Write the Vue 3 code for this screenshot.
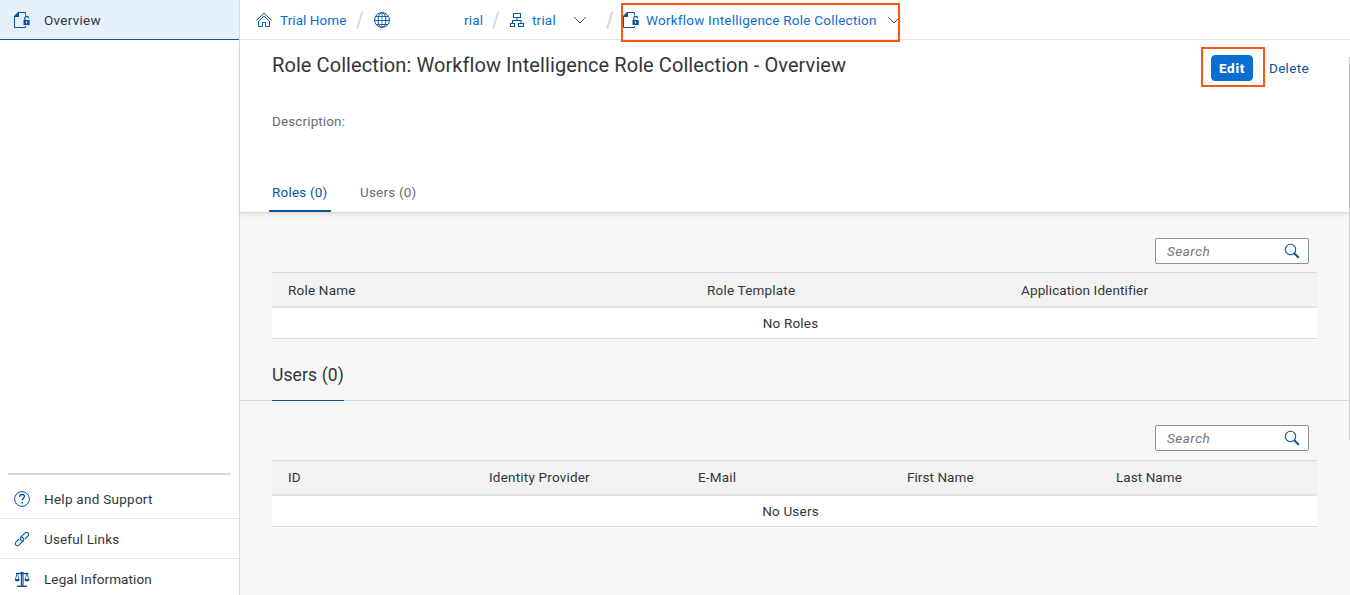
<script setup>
const help = [
  { label: 'Help and Support', icon: 'help', cls: 't-help' },
  { label: 'Useful Links', icon: 'link', cls: 't-links' },
  { label: 'Legal Information', icon: 'legal', cls: 't-legal' },
]
const roleColumns = ['Role Name', 'Role Template', 'Application Identifier']
const userColumns = ['ID', 'Identity Provider', 'E-Mail', 'First Name', 'Last Name']
</script>

<template>
  <div class="shell">
    <aside class="side">
      <a class="nav selected">
        <svg class="icon" viewBox="0 0 16 16"><use href="#i-role" /></svg>
        <span>Overview</span>
      </a>
      <div class="grow"></div>
      <div class="rule"></div>
      <a v-for="h in help" :key="h.label" class="nav">
        <svg class="icon" viewBox="0 0 16 16"><use :href="'#i-' + h.icon" /></svg>
        <span :class="h.cls">{{ h.label }}</span>
      </a>
    </aside>

    <main class="main">
      <nav class="crumbs">
        <svg class="icon" viewBox="0 0 16 16"><use href="#i-home" /></svg>
        <span class="c-home">Trial Home</span>
        <svg class="slash" viewBox="0 0 8 18"><path d="M6.300 0.500L1.200 17.500" /></svg>
        <svg class="icon globe" viewBox="0 0 16 16"><use href="#i-globe" /></svg>
        <span class="c-rial">rial</span>
        <svg class="slash s2" viewBox="0 0 8 18"><path d="M6.300 0.500L1.200 17.500" /></svg>
        <svg class="icon org" viewBox="0 0 16 16"><use href="#i-org" /></svg>
        <span class="c-trial">trial</span>
        <svg class="chev" viewBox="0 0 12 8"><path d="M.3 1.200L6 7 11.700 1.200" /></svg>
        <svg class="slash s3" viewBox="0 0 8 18"><path d="M6.300 0.500L1.200 17.500" /></svg>
        <svg class="icon role" viewBox="0 0 16 16"><use href="#i-role" /></svg>
        <span class="c-coll">Workflow Intelligence Role Collection</span>
        <svg class="chev last" viewBox="0 0 12 8"><path d="M.3 1.200L6 7 11.700 1.200" /></svg>
      </nav>

      <header class="head">
        <div class="title-row">
          <h1>Role Collection: Workflow Intelligence Role Collection - Overview</h1>
          <div class="actions">
            <button class="edit">Edit</button>
            <a class="delete">Delete</a>
          </div>
        </div>
        <p class="desc">Description:</p>
        <div class="tabs">
          <a class="tab active"><span>Roles (0)</span></a>
          <a class="tab"><span>Users (0)</span></a>
        </div>
      </header>

      <section class="block roles">
        <div class="search">
          <span>Search</span>
          <svg class="mag" viewBox="0 0 16 16"><use href="#i-search" /></svg>
        </div>
        <div class="table">
          <div class="thead role-cols"><span v-for="c in roleColumns" :key="c">{{ c }}</span></div>
          <div class="empty">No Roles</div>
        </div>
      </section>

      <div class="section-title"><h2>Users (0)</h2></div>

      <section class="block users">
        <div class="search">
          <span>Search</span>
          <svg class="mag" viewBox="0 0 16 16"><use href="#i-search" /></svg>
        </div>
        <div class="table">
          <div class="thead user-cols"><span v-for="c in userColumns" :key="c">{{ c }}</span></div>
          <div class="empty">No Users</div>
        </div>
      </section>
      <div class="scroll"></div>
    </main>

    <div class="mark mark-crumb"></div>
    <div class="mark mark-edit"></div>

    <svg class="defs" width="0" height="0">
      <symbol id="i-role" viewBox="0 0 16 16">
        <path d="M4.500 .5H11.500V3.500M.5 4.500V15.500H11.500V14" fill="none" stroke="currentColor" />
        <path d="M0 5V4L4 0H5V5Z" fill="currentColor" />
        <path d="M10.800 8V6.300a1.900 1.900 0 0 1 3.800 0" fill="none" stroke="currentColor" stroke-width="1.200" />
        <path fill-rule="evenodd" d="M9.500 8H15.700V13H9.500ZM12 9.500V11.500H13.200V9.500Z" fill="currentColor" />
      </symbol>
      <symbol id="i-home" viewBox="0 0 16 16">
        <g fill="none" stroke="currentColor" stroke-width="1">
          <path d="M.4 8.300L8 1.300 15.600 8.300" />
          <path d="M2.500 9.200V14.500H6.500V10.500H9.500V14.500H13.500V9.200L8 4.200Z" />
        </g>
      </symbol>
      <symbol id="i-globe" viewBox="0 0 16 16">
        <g fill="none" stroke="currentColor">
          <circle cx="8" cy="8" r="7.400" /><ellipse cx="8" cy="8" rx="3.900" ry="7.400" />
          <path d="M8 .5V15.500" stroke-width=".7" /><path d="M.5 8.500H15.500M2 4.500H14M2 12.500H14" stroke-width=".9" />
        </g>
      </symbol>
      <symbol id="i-org" viewBox="0 0 16 16">
        <g fill="none" stroke="currentColor" stroke-width="1.100">
          <path d="M4.500 1.500H11.500V5.500H4.500ZM1.500 11.500H5.500V14.500H1.500ZM9.500 11.500H14.500V14.500H9.500ZM8 5.500V8.500M3.500 11.500V8.500H12V11.500" />
        </g>
      </symbol>
      <symbol id="i-help" viewBox="0 0 16 16">
        <circle cx="8" cy="8" r="7.400" fill="none" stroke="currentColor" />
        <path d="M5.700 6V5.300C5.700 4 6.600 3.500 8 3.500S10.500 4.200 10.500 5.500C10.500 7.200 8.200 7.200 8.200 9.500" fill="none" stroke="currentColor" stroke-width="1.300" />
        <path d="M7.400 11H9V12.600H7.400Z" fill="currentColor" />
      </symbol>
      <symbol id="i-link" viewBox="0 0 16 16">
        <g fill="none" stroke="currentColor" stroke-width="1.100">
          <path d="M8.700 10.300L7 9C6 8.100 6 7 6.800 6.200L10.900 2.100C11.900 1.100 13.200 1.100 14.100 1.900S14.900 4.200 13.900 5.200L10.800 8.200" />
          <path d="M7.300 5.800L9 7C10 7.900 10 9 9.200 9.800L5.100 13.900C4.100 14.900 2.800 14.900 1.900 14.100S1.100 11.800 2.100 10.800L5.200 7.800" />
        </g>
      </symbol>
      <symbol id="i-legal" viewBox="0 0 16 16">
        <path d="M7.400 2V15M9 2V15" stroke="currentColor" stroke-width="1.200" />
        <path d="M3 15.300H13" stroke="currentColor" stroke-width="1.400" />
        <g fill="none" stroke="currentColor">
          <path d="M2 2.500H14.400" stroke-width="1.300" />
          <path d="M3 2.500L1.300 9M3.400 2.500L5.200 9M12.800 2.500L11 9M13.200 2.500L15 9" stroke-width=".8" />
        </g>
        <path d="M.7 8H5.700Q5.500 10.500 3.200 10.500T.7 8ZM10.500 8H15.500Q15.300 10.500 13 10.500T10.500 8ZM6.300 2.200A1.900 1.900 0 0 1 10 2.200Z" fill="currentColor" />
      </symbol>
      <symbol id="i-search" viewBox="0 0 16 16">
        <circle cx="6.500" cy="6.500" r="5.200" fill="none" stroke="currentColor" stroke-width="1.100" />
        <path d="M10.200 10.200L14.800 14.700" stroke="currentColor" stroke-width="2" />
      </symbol>
    </svg>
  </div>
</template>

<style>
body { overflow: hidden; }
</style>

<style scoped>
* { box-sizing: border-box; }
.shell { position: relative; display: flex; width: 1350px; height: 595px; overflow: hidden; background: #fff; color: #32363a; font: 13.500px/20px Roboto, "Noto Sans", sans-serif; letter-spacing: .2px; }
.defs { position: absolute; }
.icon { width: 16px; height: 16px; flex: none; color: #0854a0; }
.side { width: 240px; flex: none; display: flex; flex-direction: column; border-right: 1px solid #d9d9d9; }
.nav { height: 40px; flex: none; display: flex; align-items: center; padding-left: 14px; gap: 14px; border-bottom: 1px solid #e5e5e5; }
.nav:last-child { border-bottom: 0; margin-bottom: -4px; }
.nav span { white-space: nowrap; letter-spacing: .27px; }
.nav .t-links { letter-spacing: .15px; }
.nav .t-legal { letter-spacing: .1px; }
.selected { background: #e5f0fa; border-bottom-color: #0854a0; }
.grow { flex: 1; }
.rule { height: 2px; margin: 0 8px 4px; background: #d9d9d9; }
.main { position: relative; flex: 1; min-width: 0; background: #f7f7f7; }
.crumbs { height: 40px; display: flex; align-items: center; padding-left: 16px; background: #fff; border-bottom: 1px solid #e5e5e5; color: #0a6ed1; white-space: nowrap; }
.crumbs span { flex: none; }
.c-home { width: 67px; margin-left: 8px; letter-spacing: .08px; }
.slash { width: 8px; height: 18px; margin-left: 9px; flex: none; fill: none; stroke: #d9d9d9; stroke-width: 2.100; }
.globe { margin-left: 10px; }
.c-rial { width: 19px; margin-left: 74px; }
.org { margin-left: 9px; }
.c-trial { width: 23px; margin-left: 7px; }
.chev { width: 12px; height: 8px; margin-left: 19px; margin-top: 1px; flex: none; fill: none; stroke: #0854a0; stroke-width: 1; }
.s3 { margin-left: 20px; }
.role { margin-left: 9px; }
.c-coll { width: 230px; margin-left: 7px; letter-spacing: .225px; }
.last { margin-left: 12px; }
.head { position: relative; height: 173px; background: #fff; border-bottom: 1px solid #d9d9d9; box-shadow: 0 2px 4px rgba(0, 0, 0, .08); padding: 0 32px; display: flex; flex-direction: column; }
.title-row { display: flex; justify-content: space-between; height: 71px; }
h1 { margin: 12px 0 0; font-size: 20px; line-height: 26px; font-weight: 400; white-space: nowrap; letter-spacing: .08px; }
.actions { display: flex; align-items: center; height: 26px; margin-top: 15px; padding-right: 9px; }
.edit { width: 42px; height: 26px; margin: 0 16px 0 0; padding: 0; border: 1px solid #0a6ed1; border-radius: 4px; background: #0a6ed1; color: #fff; font: 800 13.500px/20px Roboto, sans-serif; letter-spacing: .7px; }
.delete { width: 40px; color: #0854a0; letter-spacing: .3px; }
.desc { margin: 0; color: #6a6d70; letter-spacing: .12px; }
.tabs { margin-top: auto; display: flex; gap: 26px; margin-left: -3px; color: #6a6d70; }
.tab { height: 30px; padding: 0 3px; border-bottom: 2px solid transparent; border-radius: 1px; white-space: nowrap; }
.active { width: 62px; color: #0854a0; border-color: #0854a0; }
.block { padding: 0 32px; }
.roles { padding-top: 25px; height: 149px; }
.users { padding-top: 24px; }
.search { width: 154px; height: 26px; margin-left: auto; margin-right: 9px; display: flex; align-items: center; justify-content: space-between; padding: 0 8px 0 11px; border: 1px solid #89919a; border-radius: 2px; background: #fff; color: #74777a; font-style: italic; letter-spacing: .5px; }
.mag { width: 16px; height: 16px; color: #0854a0; }
.table { width: 1045px; margin-top: 8px; border-top: 1px solid #d9d9d9; border-bottom: 1px solid #d9d9d9; background: #fff; }
.users .table { margin-top: 9px; }
.thead { height: 35px; display: grid; align-items: center; background: #f2f2f2; border-bottom: 2px solid #e5e5e5; padding-left: 16px; }
.role-cols { grid-template-columns: 419px 314px 1fr; }
.role-cols span:last-child { letter-spacing: .12px; }
.user-cols { grid-template-columns: 201px 209px 209px 209px 1fr; padding-bottom: 1px; }
.user-cols span:nth-child(n + 4) { letter-spacing: .06px; }
.empty { height: 30px; line-height: 31px; text-align: center; padding-right: 8px; }
.section-title { height: 39px; display: flex; padding-left: 32px; border-bottom: 1px solid #d9d9d9; }
h2 { height: 39px; width: 72px; margin: 0; font-size: 17.500px; line-height: 26px; font-weight: 400; border-bottom: 1px solid #0854a0; white-space: nowrap; letter-spacing: .12px; }
.scroll { position: absolute; right: 0; top: 57px; width: 1px; height: 383px; background: #c6c6c6; }
.mark { position: absolute; border: 2px solid #f95812; }
.mark-crumb { left: 621px; top: 3px; width: 279px; height: 39px; }
.mark-edit { left: 1201px; top: 47px; width: 64px; height: 40px; }
</style>
